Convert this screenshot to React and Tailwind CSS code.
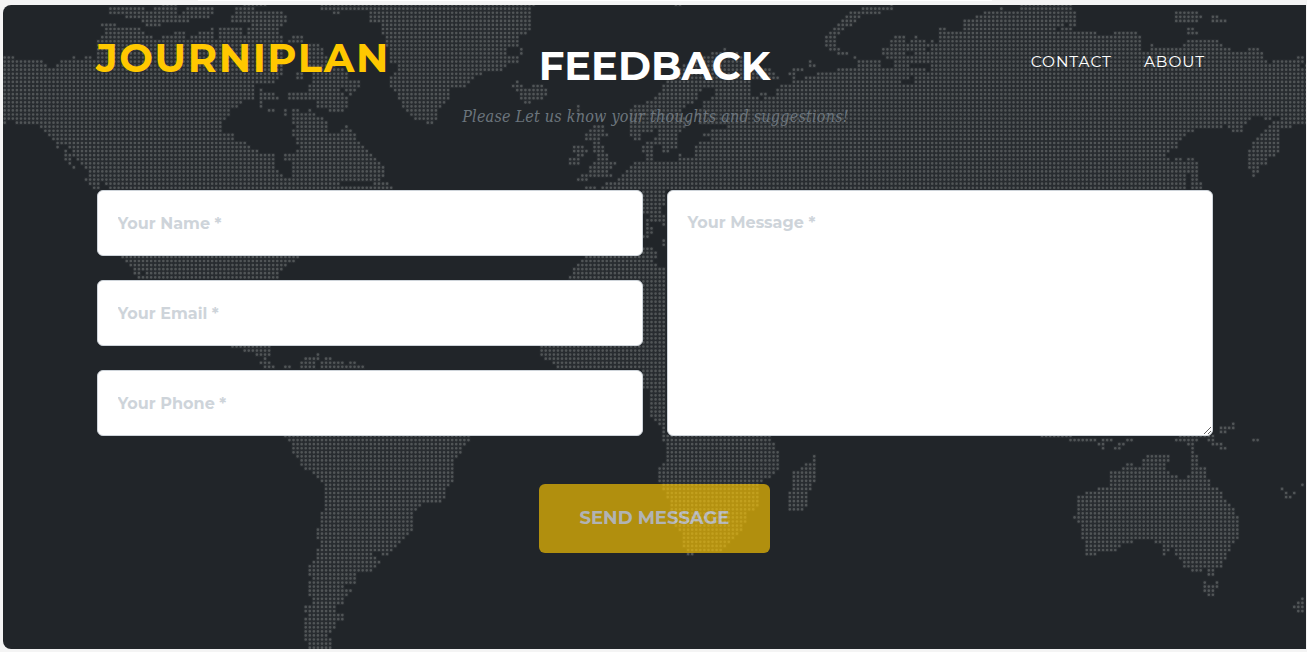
import React from "react";

// Land outlines for the dotted world map. Each sheet is drawn at 3x around its own origin.
const SHEETS = [
  {
    at: [0, 0],
    land: [
      "10,168 45,168 45,180 120,180 140,192 155,204 168,190 180,180 205,180 216,168 228,168 230,180 252,176 256,168 275,168 290,185 290,118 304,118 304,105 318,90 318,80 303,80 303,68 350,68 350,80 410,80 425,95 450,105 460,115 485,118 487,105 510,110 522,94 557,94 557,115 572,118 575,104 600,110 598,94 630,94 632,82 642,82 642,118 655,118 655,82 728,82 735,105 745,80 838,80 838,104 850,112 850,225 835,240 820,250 775,250 765,262 765,290 760,300 728,300 728,318 700,322 690,345 668,360 668,400 700,402 702,424 740,424 750,440 775,450 778,462 825,462 828,510 840,520 855,532 870,530 878,500 870,490 852,485 852,462 890,460 893,445 905,440 890,435 890,420 878,405 878,390 888,385 878,375 878,330 895,328 900,340 925,328 935,328 945,345 970,355 990,370 990,570 280,570 265,550 255,540 268,530 262,515 240,490 215,460 200,445 180,430 170,425 145,410 130,385 95,375 45,370 40,362 20,362 10,372",
      "168,426 192,426 192,447 168,447",
      "192,450 204,450 216,462 216,480 228,496 228,506 218,506 216,496 204,494 204,484 192,484",
      "328,20 390,20 410,28 435,20 440,38 455,28 475,22 490,32 530,35 545,55 540,65 500,65 470,80 440,80 420,60 375,50 365,42 330,42",
      "480,12 532,12 532,30 480,30",
      "548,35 565,22 642,22 642,40 615,65 605,50 565,67 548,67",
      "695,45 710,22 760,22 765,30 838,32 862,45 862,68 850,80 755,80 750,68 695,65",
      "730,12 800,12 800,20 730,20",
      "865,118 880,105 905,105 912,130 865,130",
      "925,130 960,135 985,170 992,225 992,320 950,320 945,300 865,300 865,280 925,275 925,255 940,250 940,218 925,200",
      "888,215 910,215 910,240 888,240",
      "778,262 790,275 810,275 838,290 838,312 825,300 790,300 788,322 778,322",
      "803,326 825,326 825,336 803,336",
      "852,326 862,326 862,350 852,350",
    ],
    water: ["180,445 190,436 204,445 215,460 240,490 246,510 262,515 262,530 235,512 216,496 216,462 204,450 192,447", "303,545 315,545 328,565 315,572 303,560"],
  },
  {
    at: [320, 0],
    land: [
      "0,350 10,352 22,370 25,400 62,400 65,385 75,375 100,395 120,425 130,445 160,465 185,490 195,510 195,530 175,545 210,548 220,570 0,570",
      "0,150 30,190 90,215 90,240 120,240 120,262 95,290 80,280 65,260 50,262 85,300 85,322 60,335 30,335 0,320",
      "0,12 650,12 648,20 635,30 635,80 620,105 600,110 600,140 610,145 605,165 598,190 560,192 555,205 530,215 490,215 465,235 440,262 405,262 390,275 385,300 370,312 355,340 350,360 340,372 320,372 318,360 285,358 265,335 245,320 235,295 215,265 210,250 210,230 222,215 240,190 210,188 210,150 200,138 188,100 185,68 150,66 148,42 130,32 60,32 60,42 40,42 38,32 0,28",
      "578,255 590,240 600,250 625,265 640,252 668,252 672,265 685,268 685,285 670,300 640,300 630,312 610,305 600,290 588,278",
      "770,315 782,315 782,332 770,332",
      "820,375 855,375 850,395 868,405 845,415 850,440 865,462 868,484 890,488 880,500 870,515 880,530 825,530 800,545 770,545 785,525 805,520 797,505 820,488 835,470 820,450 815,430 797,415 797,402 810,395",
      "760,437 790,437 805,455 790,462 782,495 748,495 750,475 765,470",
      "940,340 965,315 992,315 992,390 962,418 940,405",
      "965,430 992,425 992,470 968,458",
      "992,485 940,485 915,512 905,535 880,545 855,550 860,575 992,575",
      "795,557 835,557 835,570 795,570",
    ],
    water: ["562,142 592,142 592,168 562,168", "60,545 160,545 160,560 60,560"],
  },
  {
    at: [640, 0],
    land: [
      "-30,575 -30,505 -5,490 20,470 5,455 5,430 -20,418 -37,405 -37,340 -10,315 30,300 60,270 75,250 100,225 115,205 135,190 190,175 215,155 245,150 255,142 262,152 295,152 300,165 330,190 395,208 415,225 420,238 390,240 355,240 335,245 335,262 340,285 370,300 375,290 405,290 410,262 425,250 455,252 458,240 448,220 460,205 495,205 495,218 470,220 470,235 490,240 500,228 545,215 580,215 595,205 650,205 655,195 640,180 728,180 728,190 750,205 765,190 740,175 728,165 728,145 750,142 752,120 765,106 795,106 800,125 825,118 830,106 845,120 870,130 880,118 895,130 897,82 918,82 922,95 972,95 972,60 1005,58 1008,45 1022,45 1022,575",
      "762,12 680,20 640,35 615,45 600,70 580,85 557,105 557,140 575,155 600,168 640,172 650,190 725,190 725,180 660,180 625,160 590,140 590,110 610,90 650,70 665,45 720,42 725,30 760,28",
      "506,180 516,180 530,192 530,202 506,202",
      "105,12 125,12 125,20 105,20",
      "355,276 384,276 384,288 355,288",
    ],
    water: [
      "225,265 225,285 195,300 175,330 165,345 180,370 210,372 265,375 262,388 215,390 210,400 190,395 185,405 212,410 205,422 185,425 168,440 165,470 120,465 105,485 70,490 45,478 40,440 50,430 65,435 70,455 90,455 112,440 115,410 130,390 150,372 130,345 130,320 165,305 180,275 190,265",
      "8,405 50,388 50,405 25,428 5,430",
      "785,238 812,238 820,220 828,220 815,252 785,252",
      "803,152 816,152 816,168 803,168",
      "815,188 850,188 875,198 875,218 862,215 850,205 815,205",
      "728,190 752,190 748,205 728,205",
      "858,142 872,142 872,155 858,155",
    ],
  },
  {
    at: [970, 0],
    land: [
      "-10,60 30,45 55,32 90,30 92,18 100,18 102,30 140,30 155,12 300,12 320,35 318,80 308,92 380,95 395,105 430,105 432,94 490,94 515,110 512,150 540,152 540,130 552,130 555,143 635,143 650,118 745,118 765,140 785,143 790,155 835,155 835,143 855,143 882,160 890,185 905,195 910,180 955,180 985,168 1000,168 1012,205 1012,372 980,372 950,385 930,395 930,445 915,470 890,475 890,495 870,500 865,520 850,532 835,505 835,450 850,425 875,400 895,375 910,360 885,358 885,345 845,350 825,375 820,398 788,398 770,375 755,385 680,388 650,402 630,425 620,445 600,450 590,468 605,485 630,470 650,490 655,475 675,472 685,490 685,535 697,550 697,568 665,568 665,525 650,520 650,575 -10,575",
      "605,45 617,33 685,33 697,50 685,68 615,68",
      "715,45 745,45 750,55 770,58 770,67 727,67",
      "640,82 672,82 685,95 685,103 655,103",
    ],
    water: ["260,80 272,80 272,92 260,92", "285,68 297,68 297,80 285,80", "905,349 930,349 930,361 905,361", "990,190 1003,190 1003,204 990,204"],
  },
  {
    at: [0, 180],
    land: ["350,226 898,226 885,248 862,255 850,272 838,280 838,297 412,297 400,280 400,262 388,260 375,243"],
    water: ["424,274 436,274 436,286 424,286"],
  },
  {
    at: [200, 340],
    land: [
      "95,16 212,16 212,48 167,48 165,38 130,36 125,24 95,24",
      "190,52 200,52 200,62 212,62 212,75 225,75 225,87 190,87 190,75 180,75 180,62 190,62",
      "252,75 272,75 272,87 252,87",
      "302,63 314,63 314,50 350,50 350,40 360,40 360,62 348,63 348,87 302,87",
      "355,75 495,75 495,87 355,87",
      "362,63 433,63 433,75 362,75",
      "375,50 396,50 396,62 375,62",
      "447,63 470,63 470,75 447,75",
      "250,286 812,286 810,305 790,325 773,355 762,360 760,415 750,440 738,450 738,476 712,490 665,492 640,515 640,560 628,585 605,605 580,635 565,648 545,648 540,636 518,638 518,648 530,650 542,668 530,682 515,697 470,700 468,734 435,734 433,747 457,748 445,768 433,772 433,795 407,797 408,820 433,820 433,843 408,846 405,868 395,875 384,885 397,895 397,930 327,930 325,905 313,905 313,835 325,830 325,820 313,818 313,797 338,785 325,770 325,725 338,720 325,697 325,675 350,655 350,628 362,622 362,605 350,598 350,567 362,560 362,515 375,510 375,432 350,412 338,400 313,390 302,378 302,360 278,342 278,310 262,300",
    ],
    water: [],
  },
  {
    at: [520, 180],
    land: [
      "172,-4 205,-4 205,5 172,5",
      "196,18 230,18 230,28 196,28",
      "245,28 245,18 258,8 295,0 440,0 440,75 428,75 425,100 440,105 440,135 425,135 425,126 388,126 388,104 370,100 370,28",
      "378,115 390,115 390,138 402,142 402,162 390,173 370,173 370,165 378,160",
      "426,178 438,178 438,198 426,198",
      "195,226 370,226 370,203 400,203 412,220 405,245 415,262 440,265 440,785 428,785 425,738 405,720 390,710 390,628 370,628 370,570 110,570 100,550 75,540 62,525 62,495 145,297 160,265 180,245",
    ],
    water: [],
  },
  {
    at: [520, 420],
    land: [
      "440,46 752,46 765,70 778,105 778,150 765,162 745,175 725,190 715,225 715,265 705,273 680,275 680,305 655,345 630,370 595,395 520,397 520,407 500,407 490,385 485,345 465,320 452,265 440,235 428,210 415,185 415,145 440,115",
      "878,105 888,105 888,172 875,210 862,225 862,260 850,273 806,273 806,215 818,210 818,155 840,155 855,130 878,128",
    ],
    water: [],
  },
  {
    at: [1020, 400],
    land: [
      "382,165 448,165 448,188 436,192 440,215 475,228 478,240 500,240 502,228 515,225 515,138 502,138 502,128 465,126 465,117 478,117 478,105 585,105 585,126 605,130 620,150 600,150 598,138 575,138 562,117 536,117 536,126 523,130 523,165 535,167 535,200 560,203 560,235 572,240 575,262 597,265 608,275 608,290 632,315 645,325 645,345 657,350 657,418 645,430 632,440 630,455 620,478 608,485 608,503 584,506 584,528 565,528 562,506 547,506 547,516 515,516 512,504 490,502 478,478 455,467 455,457 442,455 440,468 430,468 430,435 403,430 400,420 345,420 335,432 305,432 292,455 232,457 230,468 197,468 185,455 195,440 185,415 185,372 172,367 160,357 160,348 172,345 172,288 197,278 235,263 270,262 270,213 297,215 307,203 320,190 340,190 342,203 367,203 368,180",
      "62,105 158,105 158,113 62,113",
      "148,117 230,117 230,126 148,126",
      "246,117 278,117 278,126 246,126",
      "234,129 254,129 254,150 246,150 246,138 234,138",
      "320,117 340,117 340,126 320,126",
      "295,129 317,129 303,150 283,150 283,141 295,138",
      "600,80 636,80 636,68 645,68 645,90 620,90 620,102 600,102",
      "698,117 720,117 720,126 698,126",
      "784,263 792,263 792,272 784,272",
      "796,275 804,275 804,287 817,287 817,297 796,297",
      "820,275 828,275 828,285 820,285",
      "844,250 853,250 853,260 844,260",
      "550,544 560,544 560,556 588,556 588,544 597,544 597,567 585,567 585,590 563,590 563,578 550,578",
      "845,593 858,580 858,640 832,640 832,630 820,626 820,617",
    ],
    water: ["440,455 452,455 452,445 465,445 465,455 452,468"],
  },
];

const outline = (text, [ox, oy]) =>
  text.trim().split(/\s+/).map((pair) => {
    const [x, y] = pair.split(",").map(Number);
    return [x / 3 + ox, y / 3 + oy];
  });

const region = (points) => {
  const xs = points.map((p) => p[0]);
  const ys = points.map((p) => p[1]);
  return { points, x0: Math.min(...xs), x1: Math.max(...xs), y0: Math.min(...ys), y1: Math.max(...ys) };
};

const LAND = SHEETS.flatMap((s) => s.land.map((t) => region(outline(t, s.at))));
const WATER = SHEETS.flatMap((s) => s.water.map((t) => region(outline(t, s.at))));

function contains(r, x, y) {
  if (x < r.x0 || x > r.x1 || y < r.y0 || y > r.y1) return false;
  let inside = false;
  const p = r.points;
  for (let i = 0, j = p.length - 1; i < p.length; j = i++) {
    if (p[i][1] > y !== p[j][1] > y && x < ((p[j][0] - p[i][0]) * (y - p[i][1])) / (p[j][1] - p[i][1]) + p[i][0]) {
      inside = !inside;
    }
  }
  return inside;
}

function buildDots() {
  let d = "";
  for (let row = 0; row < 159; row++) {
    const y = 4.6 + row * 4.07;
    for (let col = 0; col < 321; col++) {
      const x = 4.7 + col * 4.068;
      if (LAND.some((r) => contains(r, x, y)) && !WATER.some((r) => contains(r, x, y))) {
        d += `M${(x - 3).toFixed(2)} ${(y - 5).toFixed(2)}h0`;
      }
    }
  }
  return d;
}

const DOTS = buildDots();

function WorldMap() {
  return (
    <svg className="absolute inset-0" width="1303" height="644" viewBox="0 0 1303 644" aria-hidden="true">
      <path d={DOTS} stroke="#282c30" strokeWidth="4.1" strokeLinecap="square" fill="none" />
      <path d={DOTS} stroke="#515557" strokeWidth="2.7" strokeLinecap="round" fill="none" />
    </svg>
  );
}

const field =
  "block w-full rounded-md border border-[#ced4da] bg-white px-[19.5px] font-['Montserrat','Inter',sans-serif] text-[16px] font-bold text-[#212529] placeholder:text-[#ced4da] placeholder:opacity-100 outline-none";

export default function App() {
  return (
    <div className="h-[652px] w-[1307px] overflow-hidden bg-[#f4f4f4] pl-[3px] font-['Montserrat','Inter',sans-serif]">
      <div className="h-[5px] pl-[195px]">
        <div className="h-px w-[794px] bg-white" />
      </div>
      <main className="relative h-[644px] w-[1303px] overflow-hidden rounded-l-lg bg-[#212529]">
        <WorldMap />
        <div className="relative mx-[94px] w-[1116px]">
          <header className="grid h-[185px] grid-cols-[1fr_400px_1fr] items-start">
            <a className="mt-[29px] -ml-px whitespace-nowrap text-[40px] leading-[48px] font-bold tracking-[1.6px] text-[#ffc800]">
              JOURNIPLAN
            </a>
            <div className="text-center">
              <h2 className="mt-[37px] mr-px whitespace-nowrap text-[40px] leading-[48px] font-bold text-white">FEEDBACK</h2>
              <p className="mt-[15px] ml-px whitespace-nowrap font-['Roboto_Slab','DejaVu_Serif_Condensed','DejaVu_Serif',serif] text-[16px] leading-6 tracking-[0.22px] text-[#6c757d] italic">
                Please Let us know your thoughts and suggestions!
              </p>
            </div>
            <nav className="mt-[45px] mr-[8px] flex justify-end gap-8 text-[15.4px] leading-6 tracking-[0.95px] text-white">
              <a>CONTACT</a>
              <a>ABOUT</a>
            </nav>
          </header>
          <form className="flex flex-col items-center">
            <div className="grid w-full grid-cols-2 gap-6">
              <div className="flex flex-col gap-6">
                <input className={`${field} h-[66px]`} placeholder="Your Name *" />
                <input className={`${field} h-[66px]`} placeholder="Your Email *" />
                <input className={`${field} h-[66px]`} placeholder="Your Phone *" />
              </div>
              <textarea className={`${field} h-[246px] resize py-5 leading-6`} placeholder="Your Message *" />
            </div>
            <button
              type="button"
              disabled
              className="mt-12 mr-px h-[69px] w-[231px] rounded-md bg-[#ffc800] text-[18px] font-bold whitespace-nowrap text-white opacity-65"
            >
              SEND MESSAGE
            </button>
          </form>
        </div>
      </main>
    </div>
  );
}
